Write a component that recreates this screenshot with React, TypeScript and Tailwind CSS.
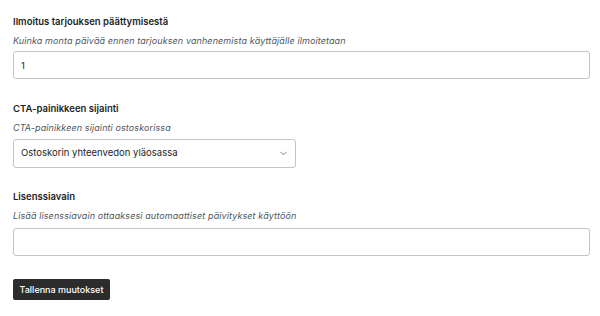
import { ChevronDown } from 'lucide-react';

type Field = {
  label: string;
  help: string;
};

const fieldLabel = 'block text-[9.5px] font-semibold leading-[12px] text-[#1e1e1e]';
const fieldHelp = 'mt-[7px] text-[9px] italic leading-[12px] tracking-[0.1px] text-[#50575e]';
const textInput =
  'block h-[28px] w-[577px] rounded-[3px] border border-[#c3c4c7] px-[7px] text-[9.5px] text-[#1e1e1e] outline-none';

function FieldHead({ label, help }: Field) {
  return (
    <div>
      <label className={fieldLabel}>{label}</label>
      <p className={fieldHelp}>{help}</p>
    </div>
  );
}

export default function App() {
  return (
    <div className="min-h-[316px] w-[600px] bg-white px-[13px] pt-[16px] font-['Inter',sans-serif]">
      <section>
        <FieldHead
          label="Ilmoitus tarjouksen päättymisestä"
          help="Kuinka monta päivää ennen tarjouksen vanhenemista käyttäjälle ilmoitetaan"
        />
        <input className={`mt-[4px] ${textInput}`} defaultValue="1" />
      </section>

      <section className="mt-[24px]">
        <FieldHead label="CTA-painikkeen sijainti" help="CTA-painikkeen sijainti ostoskorissa" />
        <div className="mt-[5px] flex h-[29px] w-[283px] items-center justify-between rounded-[3px] border border-[#c3c4c7] pl-[7px] pr-[6px]">
          <span className="text-[9.5px] text-[#1e1e1e]">Ostoskorin yhteenvedon yläosassa</span>
          <ChevronDown size={11} strokeWidth={1.6} className="text-[#50575e]" />
        </div>
      </section>

      <section className="mt-[23px]">
        <FieldHead
          label="Lisenssiavain"
          help="Lisää lisenssiavain ottaaksesi automaattiset päivitykset käyttöön"
        />
        <input className={`mt-[6px] ${textInput}`} />
      </section>

      <button className="mt-[23px] h-[21px] w-[97px] rounded-[2px] bg-[#2c2c2c] text-[9px] font-medium text-white">
        Tallenna muutokset
      </button>
    </div>
  );
}
